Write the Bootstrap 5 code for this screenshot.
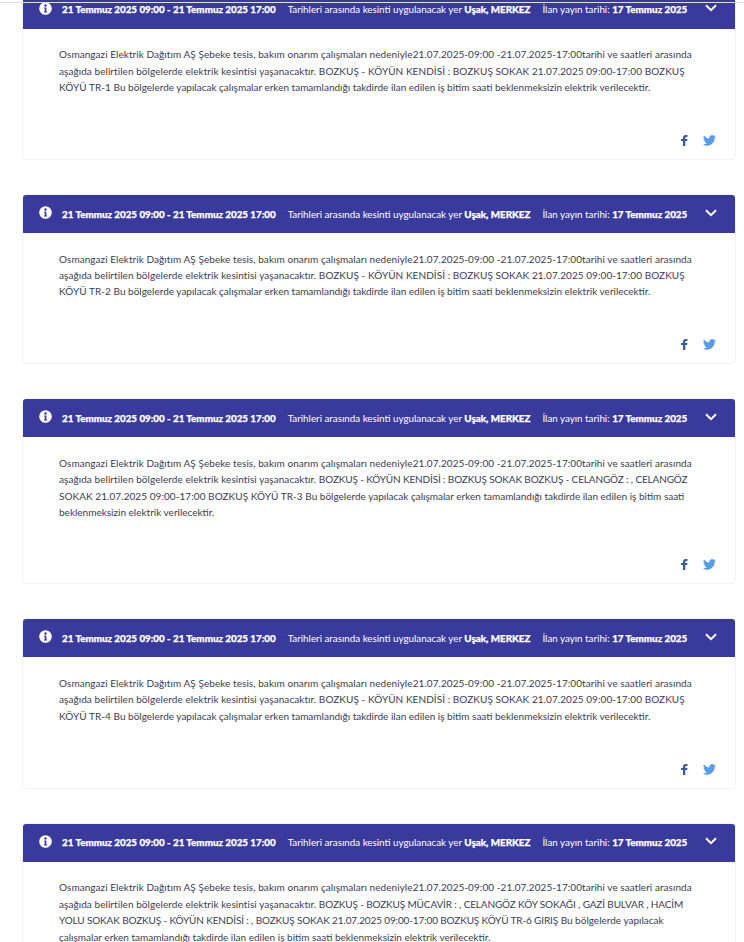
<!DOCTYPE html>
<html lang="tr">
<head>
    <meta charset="UTF-8">
    <title>Kesinti Duyuruları</title>
    <link href="https://cdn.jsdelivr.net/npm/bootstrap@5.3.0/dist/css/bootstrap.min.css" rel="stylesheet">
    <style>
        html, body { height: 942px; overflow: hidden; background: #fff; }
        body { font-family: "Lato", "Liberation Sans", sans-serif; }
        .top-rule { position: absolute; top: 2px; left: 0; right: 0; height: 1px; background: #dedede; z-index: 5; }
        .notice-list { margin: -10.4px 8px 0 22px; gap: 34px; }
        .notice { border: 1px solid #f2f3f5; border-radius: 4px; overflow: hidden; flex-shrink: 0; }
        .notice-head { background: #3a3a9c; color: #fff; height: 38px; padding: 0 18px 0 16px; font-size: 9.8px; white-space: nowrap; gap: 12px; }
        .notice-head b { font-weight: 900; -webkit-text-stroke: .25px #fff; }
        .notice-head svg { margin-bottom: 3px; display: block; }
        .head-info { margin-right: -2px; }
        .head-chevron { margin-left: auto; }
        .notice-body { padding: 17.5px 36px 0; height: 130.4px; font-size: 10px; letter-spacing: .06px; line-height: 16.4px; color: #3c3c50; white-space: nowrap; }
        .notice-body.tall { height: 146px; }
        .notice-tail { letter-spacing: 0; }
        .caps-tight { letter-spacing: -.14px; }
        .share-row { position: absolute; right: 19px; bottom: 13px; gap: 15px; }
    </style>
</head>
<body>
    <div class="top-rule"></div>
    <div id="list" class="notice-list d-flex flex-column"></div>
    <script>
        const fb = '<svg width="7" height="11" viewBox="0 0 7 11"><path fill="#3b5a9a" d="M2 11V6H0V4h2V2.6C2 .9 3 0 4.500 0H6.500v2H5.300C4.600 2 4.300 2.300 4.300 2.900V4h2.200l-.3 2H4.300v5z"/></svg>';
        const tw = '<svg width="13" height="11" viewBox="0 0 24 20"><path fill="#5a9be6" d="M24 2.400a9.800 9.800 0 0 1-2.800.8A4.900 4.900 0 0 0 23.300.5a9.800 9.800 0 0 1-3.100 1.200 4.900 4.900 0 0 0-8.400 4.500A14 14 0 0 1 1.700.9a4.900 4.900 0 0 0 1.500 6.600 4.900 4.900 0 0 1-2.200-.6c0 2.400 1.700 4.400 3.900 4.900a4.900 4.900 0 0 1-2.200.1 4.900 4.900 0 0 0 4.600 3.400A9.900 9.900 0 0 1 0 17.300 14 14 0 0 0 7.500 19.500c9.100 0 14.100-7.500 14.100-14v-.6A10 10 0 0 0 24 2.400z"/></svg>';
        const info = '<svg class="head-info" width="13" height="13" viewBox="0 0 13 13"><circle cx="6.500" cy="6.500" r="6.300" fill="#fff"/><circle cx="6.500" cy="3.500" r="1.200" fill="#3a3a9c"/><path fill="#3a3a9c" d="M5.100 5.400h2.300v4h.8v1.100H4.900V9.400h.8V6.500h-.6z"/></svg>';
        const chevron = '<svg width="12" height="8" viewBox="0 0 12 8"><path fill="none" stroke="#fff" stroke-width="2" d="M1 1.200l5 5 5-5"/></svg>';
        const intro = 'Osmangazi Elektrik Dağıtım AŞ Şebeke tesis, bakım onarım çalışmaları nedeniyle21.07.2025-09:00 -21.07.2025-17:00tarihi ve saatleri arasında<br>';
        const notices = [
            'aşağıda belirtilen bölgelerde elektrik kesintisi yaşanacaktır. BOZKUŞ - KÖYÜN KENDİSİ : BOZKUŞ SOKAK 21.07.2025 09:00-17:00 BOZKUŞ<br>KÖYÜ TR-1 <span class="notice-tail">Bu bölgelerde yapılacak çalışmalar erken tamamlandığı takdirde ilan edilen iş bitim saati beklenmeksizin elektrik verilecektir.</span>',
            'aşağıda belirtilen bölgelerde elektrik kesintisi yaşanacaktır. BOZKUŞ - KÖYÜN KENDİSİ : BOZKUŞ SOKAK 21.07.2025 09:00-17:00 BOZKUŞ<br>KÖYÜ TR-2 <span class="notice-tail">Bu bölgelerde yapılacak çalışmalar erken tamamlandığı takdirde ilan edilen iş bitim saati beklenmeksizin elektrik verilecektir.</span>',
            'aşağıda belirtilen bölgelerde elektrik kesintisi yaşanacaktır. <span class="caps-tight">BOZKUŞ - KÖYÜN KENDİSİ : BOZKUŞ SOKAK BOZKUŞ - CELANGÖZ : , CELANGÖZ</span><br>SOKAK 21.07.2025 09:00-17:00 BOZKUŞ KÖYÜ TR-3 <span class="notice-tail">Bu bölgelerde yapılacak çalışmalar erken tamamlandığı takdirde ilan edilen iş bitim saati<br>beklenmeksizin elektrik verilecektir.</span>',
            'aşağıda belirtilen bölgelerde elektrik kesintisi yaşanacaktır. BOZKUŞ - KÖYÜN KENDİSİ : BOZKUŞ SOKAK 21.07.2025 09:00-17:00 BOZKUŞ<br>KÖYÜ TR-4 <span class="notice-tail">Bu bölgelerde yapılacak çalışmalar erken tamamlandığı takdirde ilan edilen iş bitim saati beklenmeksizin elektrik verilecektir.</span>',
            'aşağıda belirtilen bölgelerde elektrik kesintisi yaşanacaktır. <span class="caps-tight">BOZKUŞ - BOZKUŞ MÜCAVİR : , CELANGÖZ KÖY SOKAĞI , GAZİ BULVAR , HACİM<br>YOLU SOKAK BOZKUŞ - KÖYÜN KENDİSİ : , BOZKUŞ SOKAK 21.07.2025 09:00-17:00 BOZKUŞ KÖYÜ TR-6 GIRIŞ</span> <span class="notice-tail">Bu bölgelerde yapılacak<br>çalışmalar erken tamamlandığı takdirde ilan edilen iş bitim saati beklenmeksizin elektrik verilecektir.</span>'
        ];
        document.getElementById('list').innerHTML = notices.map((text, i) => `
            <div class="notice position-relative">
                <div class="notice-head d-flex align-items-center">
                    ${info}
                    <span><b>21 Temmuz 2025 09:00 - 21 Temmuz 2025 17:00</b></span>
                    <span>Tarihleri arasında kesinti uygulanacak yer <b>Uşak, MERKEZ</b></span>
                    <span>İlan yayın tarihi: <b>17 Temmuz 2025</b></span>
                    <span class="head-chevron">${chevron}</span>
                </div>
                <div class="notice-body${i === 2 ? ' tall' : ''}">${intro}${text}</div>
                <div class="share-row d-flex align-items-center">${fb}${tw}</div>
            </div>`).join('');
    </script>
    <script src="https://cdn.jsdelivr.net/npm/bootstrap@5.3.0/dist/js/bootstrap.bundle.min.js"></script>
</body>
</html>
